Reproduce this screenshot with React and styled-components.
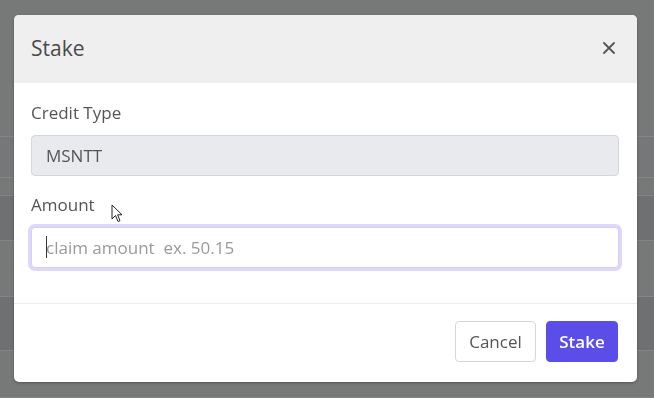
import React from "react";
import styled, { createGlobalStyle } from "styled-components";

const GlobalStyle = createGlobalStyle`
  html, body {
    margin: 0;
    padding: 0;
    width: 654px;
    height: 398px;
    overflow: hidden;
    font-family: "Open Sans", "Noto Sans", Arial, sans-serif;
  }
  * { box-sizing: border-box; }
`;

const rows = [
  { h: 137, shade: "#777878" },
  { h: 41, shade: "#767778" },
  { h: 18, shade: "#777878" },
  { h: 45, shade: "#6f7072" },
  { h: 56, shade: "#777878" },
  { h: 54, shade: "#6f7072" },
  { h: 47, shade: "#777878" },
];

const Page = styled.div`
  width: 654px;
  height: 398px;
  display: flex;
  flex-direction: column;
  background: #777878;
`;

const BgRow = styled.div`
  height: ${(p) => p.$h}px;
  flex-shrink: 0;
  background: ${(p) => p.$shade};
  border-bottom: 1px solid #838485;
`;

const Backdrop = styled.div`
  position: fixed;
  inset: 0;
  display: flex;
  justify-content: flex-start;
  align-items: flex-start;
  padding: 15px 0 0 14px;
`;

const Modal = styled.div`
  width: 623px;
  height: 367px;
  background: #fff;
  border-radius: 5px;
  overflow: hidden;
  display: flex;
  flex-direction: column;
  box-shadow: 0 1px 3px rgba(0, 0, 0, 0.3);
`;

const Header = styled.div`
  height: 68px;
  background: #efefef;
  display: flex;
  align-items: center;
  justify-content: space-between;
  padding: 0 21px 0 17px;
`;

const Title = styled.h5`
  margin: 0;
  font-size: 21px;
  font-weight: 400;
  color: #4a4a4a;
  padding-bottom: 3px;
`;

const Close = styled.button`
  border: 0;
  background: none;
  padding: 0;
  width: 14px;
  height: 14px;
  display: flex;
  align-items: center;
  justify-content: center;
  margin-bottom: 3px;
  cursor: pointer;
`;

const Body = styled.div`
  padding: 18px 18px 0 17px;
  height: 221px;
  border-bottom: 1px solid #ececec;
`;

const Group = styled.div`
  margin-bottom: 17px;
  position: relative;
`;

const Label = styled.label`
  display: block;
  font-size: 17px;
  line-height: 24px;
  color: #555;
  margin-bottom: 10px;
`;

const Field = styled.input`
  width: 100%;
  height: 41px;
  padding: 0 14px;
  font-family: inherit;
  font-size: 17px;
  color: #555;
  border-radius: 4px;
  outline: none;
  border: 1px solid ${(p) => (p.$focused ? "#d4d0f4" : "#d4d6d9")};
  background: ${(p) => (p.$readOnly ? "#e8eaed" : "#fff")};
  box-shadow: ${(p) => (p.$focused ? "0 0 0 3px #dcd8fa" : "none")};
  &::placeholder {
    color: #9a9a9a;
  }
`;

const Caret = styled.span`
  position: absolute;
  left: 15px;
  bottom: 10px;
  width: 1px;
  height: 22px;
  background: #333;
`;

const Footer = styled.div`
  flex: 1;
  display: flex;
  justify-content: flex-end;
  align-items: flex-start;
  gap: 10px;
  padding: 17px 19px 0 0;
`;

const Button = styled.button`
  height: 41px;
  width: ${(p) => (p.$primary ? 72 : 81)}px;
  padding: 0;
  font-family: inherit;
  font-size: 17px;
  border-radius: 4px;
  cursor: pointer;
  color: ${(p) => (p.$primary ? "#fff" : "#555")};
  background: ${(p) => (p.$primary ? "#5b4ee8" : "#fff")};
  border: 1px solid ${(p) => (p.$primary ? "#5b4ee8" : "#d6d6d6")};
  font-weight: ${(p) => (p.$primary ? 600 : 400)};
`;

const Pointer = styled.svg`
  position: fixed;
  left: 111px;
  top: 204px;
`;

export default function App() {
  return (
    <>
      <GlobalStyle />
      <Page>
        {rows.map((r, i) => (
          <BgRow key={i} $h={r.h} $shade={r.shade} />
        ))}
      </Page>
      <Backdrop>
        <Modal>
          <Header>
            <Title>Stake</Title>
            <Close aria-label="close">
              <svg width="12" height="12" viewBox="0 0 12 12">
                <path d="M1 1L11 11M11 1L1 11" stroke="#555" strokeWidth="1.8" strokeLinecap="round" />
              </svg>
            </Close>
          </Header>
          <Body>
            <Group>
              <Label>Credit Type</Label>
              <Field $readOnly readOnly value="MSNTT" />
            </Group>
            <Group>
              <Label>Amount</Label>
              <Field $focused placeholder="claim amount  ex. 50.15" />
              <Caret />
            </Group>
          </Body>
          <Footer>
            <Button>Cancel</Button>
            <Button $primary>Stake</Button>
          </Footer>
        </Modal>
      </Backdrop>
      <Pointer width="12" height="19" viewBox="0 0 12 19">
        <path d="M1 1L1 15L4.5 11.5L7 17.5L9 16.6L6.6 10.8L11 10.8Z" fill="#fff" stroke="#222" strokeWidth="1" strokeLinejoin="round" />
      </Pointer>
    </>
  );
}
